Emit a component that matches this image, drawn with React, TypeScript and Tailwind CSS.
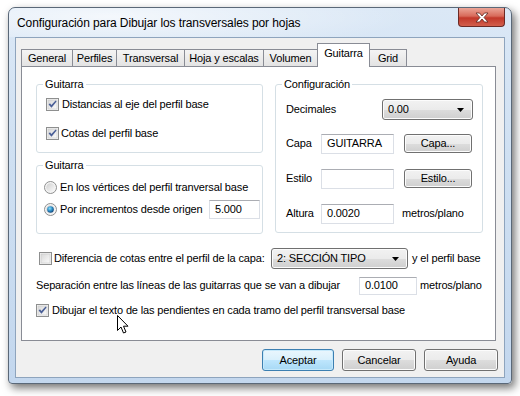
import React from "react";

const btnBg =
  "bg-[linear-gradient(to_bottom,#f2f2f2_0%,#ebebeb_50%,#dddddd_51%,#cfcfcf_100%)]";

function Check({ checked }: { checked?: boolean }) {
  return (
    <svg width="13" height="13" viewBox="0 0 13 13" className="shrink-0">
      <defs>
        <linearGradient id="cbg" x1="0" y1="0" x2="1" y2="1">
          <stop offset="0" stopColor="#d8d8d8" />
          <stop offset="1" stopColor="#fbfbfb" />
        </linearGradient>
      </defs>
      <rect x="0.5" y="0.5" width="12" height="12" fill="#f4f4f4" stroke="#8e8f8f" />
      <rect x="2" y="2" width="9" height="9" fill="url(#cbg)" stroke="#c8c8c8" strokeWidth="0.6" />
      {checked && (
        <path
          d="M2.6 6.4 L4 5.2 L5.4 7 L9.6 2.4 L10.6 3.4 L5.5 9.8 Z"
          fill="#4a5f97"
        />
      )}
    </svg>
  );
}

function Radio({ checked }: { checked?: boolean }) {
  return (
    <svg width="13" height="13" viewBox="0 0 13 13" className="shrink-0">
      <defs>
        <linearGradient id="rbg" x1="0" y1="0" x2="1" y2="1">
          <stop offset="0" stopColor="#cfcfcf" />
          <stop offset="1" stopColor="#fafafa" />
        </linearGradient>
        <radialGradient id="rdot" cx="0.4" cy="0.35" r="0.7">
          <stop offset="0" stopColor="#8fe0f8" />
          <stop offset="0.5" stopColor="#2f8fc8" />
          <stop offset="1" stopColor="#0c3b6e" />
        </radialGradient>
      </defs>
      <circle cx="6.5" cy="6.5" r="6" fill="#f4f4f4" stroke="#8e8f8f" />
      <circle cx="6.5" cy="6.5" r="4.3" fill="url(#rbg)" />
      {checked && <circle cx="6.5" cy="6.5" r="3.3" fill="url(#rdot)" />}
    </svg>
  );
}

function TextBox({ value, className }: { value?: string; className: string }) {
  return (
    <div
      className={`flex items-center bg-white border border-[#dbdfe6] border-t-[#abadb3] px-[5px] ${className}`}
    >
      {value}
    </div>
  );
}

function Button({ label, className, primary }: { label: string; className: string; primary?: boolean }) {
  return (
    <div
      className={`flex items-center justify-center rounded-[3px] border ${
        primary
          ? "border-[#3c7fb1] bg-[linear-gradient(to_bottom,#eaf6fd_0%,#d9f0fc_50%,#bee6fd_51%,#a7d9f5_100%)] shadow-[inset_0_0_0_1px_#c6e9fb]"
          : `border-[#707070] ${btnBg} shadow-[inset_0_0_0_1px_#fcfcfc]`
      } ${className}`}
    >
      {label}
    </div>
  );
}

function Combo({ value, className }: { value: string; className: string }) {
  return (
    <div
      className={`flex items-center rounded-[3px] border border-[#707070] ${btnBg} shadow-[inset_0_0_0_1px_#fcfcfc] pl-[5px] pr-[8px] ${className}`}
    >
      <span className="flex-1">{value}</span>
      <svg width="7" height="4" viewBox="0 0 7 4">
        <path d="M0 0 H7 L3.5 4 Z" fill="#000" />
      </svg>
    </div>
  );
}

function Group({ title, className, children }: { title: string; className: string; children: React.ReactNode }) {
  return (
    <div className={`relative rounded-[3px] border border-[#d5dfe5] ${className}`}>
      <span className="absolute -top-[8px] left-[6px] bg-white px-[2px] leading-[14px]">{title}</span>
      {children}
    </div>
  );
}

const tabs = [
  { label: "General", w: "w-[52px]" },
  { label: "Perfiles", w: "w-[45px]" },
  { label: "Transversal", w: "w-[69px]" },
  { label: "Hoja y escalas", w: "w-[80px]" },
  { label: "Volumen", w: "w-[55px]" },
  { label: "Guitarra", w: "w-[53px]", active: true },
  { label: "Grid", w: "w-[38px]" },
];

export default function App() {
  return (
    <div className="w-[520px] h-[396px] bg-white pt-[7px] pl-[8px] font-['Liberation_Sans',Arial,sans-serif] text-[11px] tracking-[-0.15px] whitespace-nowrap text-black relative overflow-hidden">
      {/* Window */}
      <div className="w-[504px] h-[377px] rounded-t-[7px] rounded-b-[4px] border border-[#5a6878] bg-[linear-gradient(to_bottom,#dbe8f6_0%,#cfe0f2_40%,#c3d7ee_100%)] shadow-[3px_4px_9px_rgba(0,0,0,0.55)] flex flex-col">
        {/* Title bar */}
        <div className="h-[29px] flex items-start relative">
          <div className="absolute inset-0 rounded-t-[7px] bg-[radial-gradient(ellipse_60%_120%_at_20%_30%,rgba(255,255,255,0.7),transparent)]" />
          <span className="relative pl-[8px] pt-[8px] text-[12px] leading-[14px] tracking-[-0.1px]">
            Configuración para Dibujar los transversales por hojas
          </span>
          <div className="relative ml-auto mr-[6px] w-[47px] h-[19px] rounded-b-[4px] border border-t-0 border-[#6b2a25] bg-[linear-gradient(to_bottom,#eba597_0%,#d86a5a_45%,#c2382a_55%,#d25f4c_100%)] flex items-center justify-center">
            <svg width="14" height="11" viewBox="0 0 14 11">
              <path
                d="M1 1 H4.5 L7 4 L9.5 1 H13 L9 5.5 L13 10 H9.5 L7 7 L4.5 10 H1 L5 5.5 Z"
                fill="#fff"
                stroke="#5a2620"
                strokeWidth="0.8"
              />
            </svg>
          </div>
        </div>

        {/* Client area */}
        <div className="mx-[6px] h-[341px] border border-[#8ea4bd] bg-[#f0f0f0] pt-[5px] pl-[5px] flex flex-col">
          {/* Tabs */}
          <div className="flex items-end h-[23px]">
            {tabs.map((t) =>
              t.active ? (
                <div
                  key={t.label}
                  className={`${t.w} h-[24px] -mb-px -ml-px relative z-10 bg-white border border-b-0 border-[#898c95] flex justify-center pt-[3px] leading-[13px]`}
                >
                  {t.label}
                </div>
              ) : (
                <div
                  key={t.label}
                  className={`${t.w} h-[17px] -ml-px first:ml-0 border border-b-0 border-[#898c95] bg-[linear-gradient(to_bottom,#f4f4f4,#e3e3e3)] flex items-center justify-center leading-[13px]`}
                >
                  {t.label}
                </div>
              )
            )}
          </div>

          {/* Panel */}
          <div className="w-[475px] h-[275px] bg-white border border-[#898c95] pt-[17px] pl-[14px]">
            <div className="flex gap-[12px]">
              <div className="flex flex-col gap-[12px]">
                <Group title="Guitarra" className="w-[227px] h-[69px] pt-[10px] pl-[9px] flex flex-col gap-[11px]">
                  <div className="flex items-center h-[18px] gap-[3px]">
                    <Check checked />
                    <span>Distancias al eje del perfil base</span>
                  </div>
                  <div className="flex items-center h-[18px] gap-[2px]">
                    <Check checked />
                    <span>Cotas del perfil base</span>
                  </div>
                </Group>
                <Group title="Guitarra" className="w-[227px] h-[69px] pt-[12px] pl-[7px] pr-[2px] flex flex-col gap-[4px]">
                  <div className="flex items-center h-[18px] gap-[3px]">
                    <Radio />
                    <span>En los vértices del perfil tranversal base</span>
                  </div>
                  <div className="flex items-center h-[18px] gap-[3px]">
                    <Radio checked />
                    <span>Por incrementos desde origen</span>
                    <TextBox value="5.000" className="ml-auto w-[51px] h-[19px]" />
                  </div>
                </Group>
              </div>

              <Group title="Configuración" className="w-[208px] h-[149px] pt-[14px] pl-[10px] flex flex-col">
                <div className="flex items-center h-[21px]">
                  <span className="w-[96px]">Decimales</span>
                  <Combo value="0.00" className="w-[91px] h-[21px]" />
                </div>
                <div className="flex items-center h-[21px] mt-[13px]">
                  <span className="w-[35px]">Capa</span>
                  <TextBox value="GUITARRA" className="w-[73px] h-[20px]" />
                  <Button label="Capa..." className="ml-[10px] w-[68px] h-[19px]" />
                </div>
                <div className="flex items-center h-[21px] mt-[14px]">
                  <span className="w-[35px]">Estilo</span>
                  <TextBox className="w-[73px] h-[20px]" />
                  <Button label="Estilo..." className="ml-[10px] w-[68px] h-[19px]" />
                </div>
                <div className="flex items-center h-[21px] mt-[14px]">
                  <span className="w-[35px]">Altura</span>
                  <TextBox value="0.0020" className="w-[73px] h-[20px]" />
                  <span className="ml-[8px]">metros/plano</span>
                </div>
              </Group>
            </div>

            {/* Bottom rows */}
            <div className="flex items-center h-[21px] mt-[14px] pl-[3px]">
              <Check />
              <span className="ml-[2px] w-[217px]">Diferencia de cotas entre el perfil de la capa:</span>
              <Combo value="2: SECCIÓN TIPO" className="w-[137px] h-[21px]" />
              <span className="ml-[4px]">y el perfil base</span>
            </div>
            <div className="flex items-center h-[21px] mt-[6px]">
              <span className="w-[323px]">Separación entre las líneas de las guitarras que se van a dibujar</span>
              <TextBox value="0.0100" className="w-[58px] h-[18px]" />
              <span className="ml-[3px]">metros/plano</span>
            </div>
            <div className="flex items-center h-[21px] mt-[4px]">
              <Check checked />
              <span className="ml-[3px]">Dibujar el texto de las pendientes en cada tramo del perfil transversal base</span>
            </div>
          </div>

          {/* Dialog buttons */}
          <div className="flex justify-end gap-[8px] mt-[8px] pr-[6px]">
            <Button label="Aceptar" primary className="w-[72px] h-[22px]" />
            <Button label="Cancelar" className="w-[74px] h-[22px]" />
            <Button label="Ayuda" className="w-[74px] h-[22px]" />
          </div>
        </div>
      </div>

      {/* Mouse pointer */}
      <svg className="absolute left-[117px] top-[315px]" width="12" height="19" viewBox="0 0 12 19">
        <path
          d="M0.5 0.5 V15.5 L4 12 L6.5 18 L9 17 L6.5 11.2 H11 Z"
          fill="#fff"
          stroke="#000"
          strokeWidth="1"
          strokeLinejoin="round"
        />
      </svg>
    </div>
  );
}
